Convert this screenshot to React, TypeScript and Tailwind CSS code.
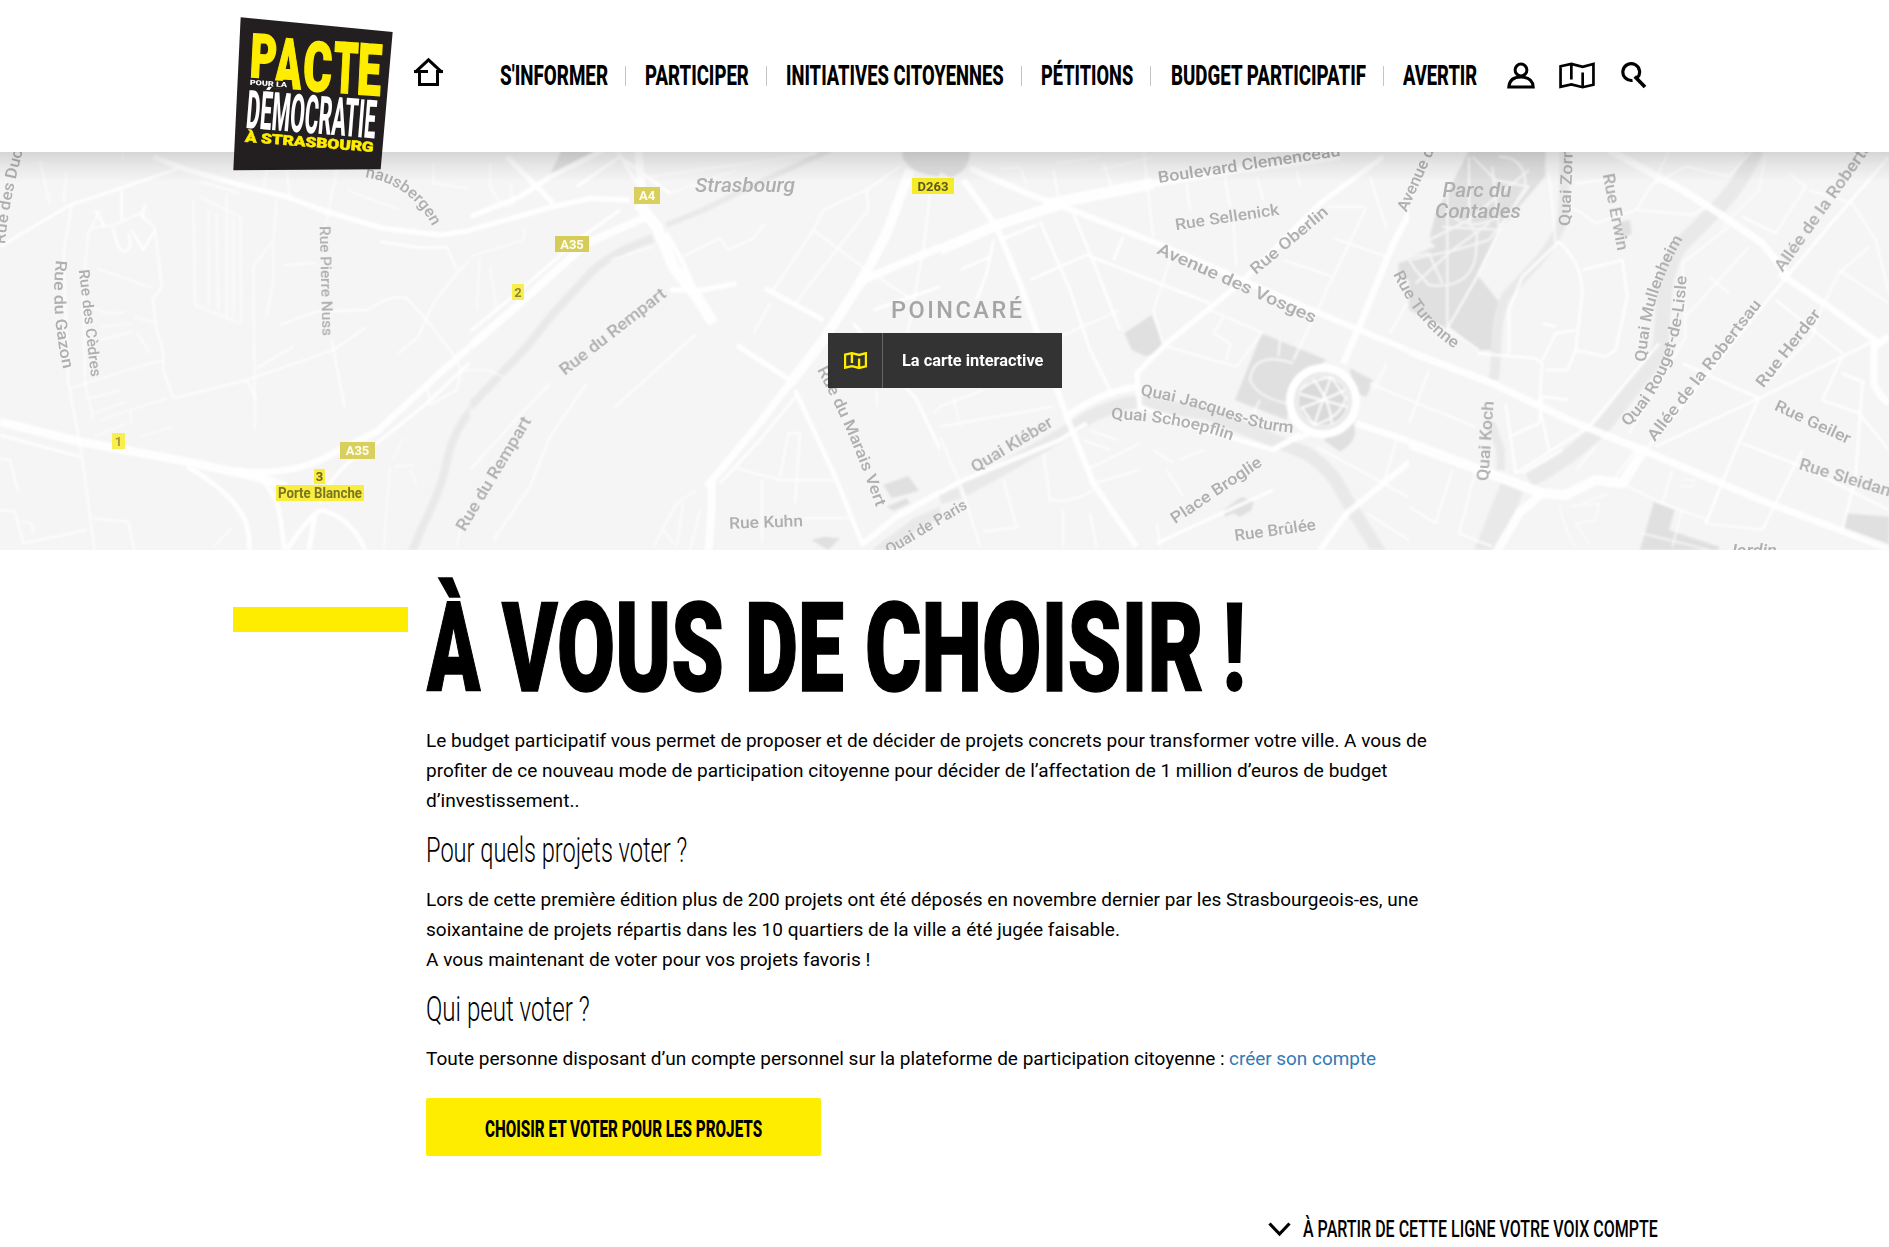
import { useLayoutEffect, useRef, useState } from "react";
import type { ReactNode } from "react";

/** Text condensed (or stretched) horizontally so that it fills the width of its box. */
function Fit({ className = "", children }: { className?: string; children: ReactNode }) {
  const box = useRef<HTMLSpanElement>(null);
  const text = useRef<HTMLSpanElement>(null);
  const [scale, setScale] = useState(1);
  useLayoutEffect(() => {
    if (box.current && text.current) setScale(box.current.offsetWidth / text.current.offsetWidth);
  }, []);
  return (
    <span ref={box} className={"block shrink-0 " + className}>
      <span
        ref={text}
        className="inline-block origin-left whitespace-nowrap"
        style={{ transform: `scaleX(${scale})` }}
      >
        {children}
      </span>
    </span>
  );
}

function MapIcon({ className }: { className: string }) {
  return (
    <svg className={className} viewBox="0 0 35 26" fill="none" stroke="currentColor">
      <path d="M1.5 4 L12 1.8 L23 4.6 L33.5 1.8 V22 L23 24.4 L12 21.6 L1.5 24 Z" />
      <path d="M12 2 V17 M23 10 V24" />
    </svg>
  );
}

function Logo() {
  return (
    <svg className="block h-[156px] w-[162px]" viewBox="39 48 486 468" fontFamily="Roboto" fontWeight="900">
      <polygon points="62,52 518,96 482,508 40,511" fill="#231f20" />
      <g fill="#ffed00" stroke="#ffed00" strokeWidth="5">
        <text transform="matrix(1 .07 -.05 1 88 230)" fontSize="182" textLength="80" lengthAdjust="spacingAndGlyphs">P</text>
        <text transform="matrix(1 .07 -.05 1 161 262)" fontSize="208" textLength="80" lengthAdjust="spacingAndGlyphs">A</text>
        <text transform="matrix(1 .07 -.05 1 247 270)" fontSize="206" textLength="86" lengthAdjust="spacingAndGlyphs">C</text>
        <text transform="matrix(1 .07 -.05 1 337 276)" fontSize="212" textLength="73" lengthAdjust="spacingAndGlyphs">T</text>
        <text transform="matrix(1 .07 -.05 1 409 282)" fontSize="214" textLength="72" lengthAdjust="spacingAndGlyphs">E</text>
      </g>
      <text transform="matrix(1 .08 -.08 1 76 384)" fontSize="160" fontWeight="800" fill="#fff" textLength="388" lengthAdjust="spacingAndGlyphs">DÉMOCRATIE</text>
      <polygon points="80,237 207,244 205,268 80,262" fill="#231f20" />
      <path d="M138 269 L145 260 L156 261 L148 270 Z" fill="#fff" />
      <text transform="matrix(1 .07 -.05 1 89 254)" fontSize="21" fill="#fff" textLength="112" lengthAdjust="spacingAndGlyphs">POUR LA</text>
      <text transform="matrix(1 .08 -.08 1 74 425)" fontSize="41" fill="#ffed00" stroke="#ffed00" strokeWidth="1.5" textLength="386" lengthAdjust="spacingAndGlyphs">À STRASBOURG</text>
    </svg>
  );
}

type Road = [number, string];
type Tile = { x: number; water: Road[]; parks: string[]; roads: Road[] };

/* Street plan, cut in four tiles; each is drawn at three times its size. */
const tiles: Tile[] = [
  {
    x: 0,
    water: [[24, "M1450 740 C1370 820 1350 880 1335 960 C1310 1060 1270 1110 1235 1210"]],
    parks: [],
    roads: [
      [26, "M0 815 L240 875 L560 935 L790 985 L860 1010"],
      [20, "M700 960 Q880 985 1010 905 L1130 845 L1330 660 L1440 565"],
      [10, "M960 1060 Q1000 950 1130 880 L1280 760 L1440 610"],
      [9, "M0 855 L130 890 L240 920"],
      [14, "M560 950 Q690 1020 735 1110 Q750 1150 748 1210"],
      [14, "M780 985 Q830 1030 840 1100 L855 1210"],
      [14, "M860 1200 Q950 1060 980 1085 Q1060 1110 1100 1210"],
      [16, "M945 1090 L925 1210"],
      [9, "M0 290 L210 165 L390 105 L550 50"],
      [16, "M460 20 L550 55 L720 105 L860 140 L980 185 L1150 235 L1320 255 L1440 238"],
      [6, "M600 95 L720 130"],
      [8, "M1140 275 L1260 293 L1340 292"],
      [7, "M215 165 L190 310 L205 700 L240 880 L270 1100 L285 1210"],
      [6, "M300 180 L265 250 L250 400 L255 700 L280 810"],
      [7, "M270 235 L340 225 L420 190 L465 235 L485 410 L458 450 L470 540 L490 610 L490 660 L520 745"],
      [8, "M340 235 Q350 300 375 305 Q400 295 385 250 M395 240 Q430 300 430 300 L465 240 M315 230 L285 180 M365 120 L365 210 M440 165 Q420 180 432 210"],
      [6, "M290 355 L460 415 M280 470 Q320 500 375 485 M400 500 L470 520 M410 545 L450 610 M210 715 L400 655 L490 630 M300 570 L400 545"],
      [5, "M270 745 L360 720 M280 790 L380 755 M300 810 L500 745 M390 780 L395 820 M420 860 L520 830 M280 860 L380 820"],
      [6, "M120 30 L150 165 M200 70 L190 160 M370 0 L365 30 M800 60 L790 110 M860 60 L870 140 M1010 60 L985 185 L975 230"],
      [6, "M580 150 L585 465 L720 520 M600 140 L720 200 L725 520 M625 180 L625 470 M650 190 L655 480 M680 130 L680 500 M700 200 L700 500"],
      [6, "M830 150 L820 270 L760 350 L765 840 M820 280 L820 390 L800 500 M850 345 L950 340"],
      [7, "M520 745 L740 690 L1000 600 L1100 530 M770 655 L880 590 M740 690 L770 750"],
      [7, "M840 525 L950 485 L1100 480 Q1180 430 1220 445 L1280 510 L1350 600 M1000 600 L1035 775 M995 570 L1000 600"],
      [7, "M1440 300 L1370 370 L1300 460 L1255 560 L1195 610 M1340 290 L1370 360"],
      [7, "M1350 600 L1385 660 L1370 720 L1290 765 M1390 660 L1440 665 M1280 700 L1290 765"],
      [7, "M0 925 L30 930 L55 1025 M0 1080 L45 1085 L70 1180 L260 1140 M65 1115 L95 1120 L100 1150 M280 1105 L385 1115 L405 1210"],
      [5, "M1040 120 L1200 180 M1170 950 L1150 1200 M1230 960 L1250 1000 M1180 950 L1240 945 M640 1190 L700 1130 M1300 40 L1300 100 L1440 120 M1370 1190 L1390 1100 L1440 1030"],
      [4, "M1440 340 L1410 500 L1440 520 M1210 860 L1180 930 M300 530 L400 520"],
    ],
  },
  {
    x: 470,
    water: [
      [24, "M550 265 Q440 300 370 360 L250 490 L170 590 L0 770"],
      [16, "M590 225 L700 180 L820 120 L1080 0"],
      [34, "M1440 1075 L1340 1120 L1220 1210"],
    ],
    parks: [
      "M275 0 L375 0 Q310 60 240 75 Z",
      "M1297 0 H1440 V65 L1400 78 Q1320 70 1297 20 Z",
      "M1240 1005 L1315 978 L1347 1022 L1265 1045 Z",
      "M1025 1170 L1060 1160 L1110 1165 L1075 1200 Z",
      "M1250 1070 L1310 1045 L1320 1060 L1270 1082 Z",
    ],
    roads: [
      [24, "M0 590 L150 460 L350 280 L530 200"],
      [10, "M0 545 L140 430 L330 265 L450 180"],
      [16, "M0 240 L250 170 L360 145 L480 150"],
      [16, "M110 20 L250 160 M0 200 L150 140 L240 80 L400 0"],
      [34, "M505 160 L560 230 L610 350 L680 440 L730 520"],
      [14, "M590 250 L640 340 L670 410"],
      [16, "M600 420 L700 420 L800 400"],
      [24, "M505 0 L520 170"],
      [10, "M320 110 L450 20 L600 130 M440 0 L500 100"],
      [30, "M1320 60 L1250 250 L1170 400 L1060 570 L960 700"],
      [24, "M1440 280 L1260 355 L1160 400"],
      [16, "M885 415 L1060 510 M800 585 L960 690"],
      [22, "M960 700 L860 830 L710 1010"],
      [8, "M985 730 L870 870 L750 1000"],
      [24, "M725 1000 L725 1080 L715 1210"],
      [14, "M975 720 L1100 990 L1180 1190"],
      [10, "M1150 520 L1340 750 L1440 960 M1210 480 L1440 400"],
      [18, "M1180 1180 L1280 1100 L1440 1010"],
      [7, "M640 320 L750 265 L775 300 L850 265 L885 220"],
      [7, "M430 775 L680 550 M240 700 L90 860 L0 960 M350 700 L240 860 L180 1010 L70 1170"],
      [7, "M910 420 L1030 240 L1060 180 L1190 120 L1290 50 M1190 120 L1195 180 L1060 350 L970 470 M1030 240 L1190 360 L1330 450 M900 460 L850 550"],
      [7, "M1380 130 L1360 300 L1310 560 M800 955 L930 990 L1100 990 M930 980 L955 850 L990 850 L975 1060 M875 990 L875 1180 M1000 1105 L1140 1105"],
      [6, "M680 1020 L620 1060 L550 1190 M640 1060 L620 1190 M690 1080 L660 1200 M580 1140 L610 1180"],
      [5, "M0 660 L50 660 L100 680 M30 320 L20 480 M60 350 L80 480 M420 330 L550 290 M0 320 L160 270 L165 230"],
      [6, "M60 40 L60 110 Q100 190 130 160 L120 100 M1220 720 L1220 770 M1440 740 L1390 790"],
      [5, "M540 80 L900 30 L1040 10 M600 130 L800 60"],
    ],
  },
  {
    x: 940,
    water: [
      [40, "M70 1020 Q240 930 380 845 L450 800 Q580 740 620 760 L800 790 Q1000 870 1100 910 Q1180 960 1220 1050 L1320 1210"],
      [34, "M0 1045 L60 1030"],
    ],
    parks: [
      "M0 0 H90 Q90 65 30 82 L0 65 Z",
      "M553 550 L635 495 L668 580 Q640 620 615 618 L575 600 Z",
      "M965 550 L1160 630 L1060 700 L1040 810 L885 750 Z",
      "M1230 655 L1298 690 L1280 740 L1240 730 Z",
      "M1150 870 L1240 820 Q1260 870 1200 905 Z",
      "M850 1080 L905 1040 L940 1055 L935 1080 L900 1100 L880 1090 L855 1100 Z",
      "M1375 340 L1440 320 V400 L1375 380 Z",
    ],
    roads: [
      [32, "M0 300 L170 225 L370 160"],
      [34, "M310 165 L440 140 L640 100"],
      [20, "M640 100 L900 60 L1200 20"],
      [18, "M90 55 L260 130 L410 185 L650 280 L860 370 L1150 495 L1440 615"],
      [18, "M70 90 L170 230 L240 400 L310 600 L380 800 L460 1000 L590 1190"],
      [16, "M1330 20 L1140 160 L900 400 L680 580 L590 670 L600 780"],
      [20, "M380 800 Q480 725 590 710"],
      [20, "M1440 130 L1360 280 L1270 500 L1210 640"],
      [14, "M0 1030 L50 1000 L360 870 L440 820 M600 770 L760 830 L1000 900 L1060 870 L1110 850"],
      [10, "M650 1180 L800 1110 L1000 1020 M990 900 L1080 850"],
      [20, "M1250 820 L1440 885"],
      [18, "M1440 910 L1330 1000 L1220 1090 L1140 1200"],
      [9, "M300 215 L390 420 L450 600 L520 740 M400 190 L470 360 L540 540 M550 260 L520 330 M60 360 L150 320 M270 390 L440 315 L620 385 L810 460 M180 270 L290 225 M160 270 L140 370 L110 450"],
      [7, "M340 60 L355 140 M490 40 L515 110 M610 0 L640 260 M740 100 L750 180 M855 80 L870 170 M880 220 L890 350 M950 80 L970 150 M1070 60 L1080 110 M1290 80 L1340 240 M1160 170 L1270 170 M1180 265 L1340 320 M1280 170 L1180 380 L1060 630 M1030 330 L1180 380 M1400 460 L1350 550"],
      [7, "M690 330 L640 480 L668 580 M680 590 L890 650 L965 550 M810 480 L970 550 M850 500 L820 550 L870 580 L860 630 M360 560 L540 480"],
      [7, "M60 1000 L120 1190 M190 990 L230 1130 M310 910 L330 1050 Q400 1060 460 1020 M370 1080 L370 1190 M130 1145 L240 1130 M0 860 L60 1000 M0 830 L340 770 M0 770 L130 720 M450 840 L530 870 M430 870 L510 900 M440 960 L600 880 M460 1000 L600 960 M680 960 L730 1040 M640 900 L700 940 M450 1090 L470 1190"],
      [7, "M1370 870 L1330 1000 M1440 800 L1430 760 L1290 700 M1340 640 L1300 720 M1130 890 L1440 1060 M1280 1090 L1440 1190 M720 930 L790 900 M660 1190 L650 1120"],
      [6, "M1020 570 L1015 620 M1060 640 Q940 600 930 690 Q950 740 1040 760 M960 750 L940 790"],
      [5, "M180 60 L240 50 L260 100 M350 40 L480 20 M480 60 L640 20 M0 560 L100 640 L140 720 M40 740 L60 830"],
    ],
  },
  {
    x: 1409,
    water: [
      [30, "M468 0 L462 200 Q450 260 390 330 L290 440 Q262 500 262 600 L255 690"],
      [26, "M245 820 L275 900 L275 960"],
      [46, "M1040 0 Q1000 100 920 180 L820 280 Q770 340 765 450 L755 580 Q740 640 690 690 L590 820 Q480 930 360 990"],
      [72, "M310 1010 L230 1210"],
    ],
    parks: [
      "M180 0 L410 0 L408 80 L270 240 L205 370 L115 535 L0 480 V320 L80 290 L60 270 L80 190 L130 100 Z",
      "M205 375 L270 455 L265 600 L210 600 L120 530 Z",
      "M635 215 L662 210 L668 250 L640 270 Z",
      "M735 1055 L797 1080 L780 1140 L930 1190 V1210 H690 Z",
      "M1310 1090 L1440 1100 V1200 L1295 1140 Z",
    ],
    roads: [
      [22, "M0 605 L250 700 L480 810 L700 900 L1080 1060 L1440 1195"],
      [30, "M0 880 L200 955 L400 1030 L470 1035 L560 990 L640 1000 L710 890"],
      [26, "M400 1030 L330 1090 L260 1210"],
      [22, "M600 0 L820 120 L930 190 L1060 280 L1140 380"],
      [20, "M1110 370 L1260 470 L1410 580"],
      [22, "M1440 560 L1395 590 L1395 700 Q1410 740 1440 760"],
      [9, "M715 895 L1100 420 L1250 240 L1440 20"],
      [6, "M180 20 L180 200 Q190 250 205 250 L200 320 Q180 420 60 405 L20 360 L0 330 L140 300 L240 270 L360 110 L260 90 L190 20 M115 100 L115 535 M250 50 L270 240 L205 380 L115 535 L210 600 M60 270 L180 210 L360 60 M100 230 L280 240 M270 20 Q350 20 350 110 L270 240 M20 400 L130 300 L240 220 M0 320 L60 310 L100 400 M120 190 Q180 250 270 200"],
      [8, "M205 610 L380 625 L400 640 L390 760 L420 900 M300 610 L300 480 L340 380 L450 275 Q520 340 520 430 L500 600 L475 660 L410 660 M520 360 L640 330 L655 440 L620 600 L590 620 L500 600 M500 540 L440 550 L400 630 M400 520 L440 530"],
      [8, "M290 760 L320 970 L540 830 L700 640 L750 580 M300 860 L390 820 L400 740 L480 750 M340 970 L460 900"],
      [7, "M420 70 L440 280 M480 170 L520 190 L560 220 L620 200 L680 180 L850 195 L890 170 M680 180 L740 90 L780 0 M740 100 L830 50 L960 80 L1030 0 M500 100 L580 90"],
      [7, "M960 230 L820 340 L830 560 L750 700 L660 850 M900 380 L960 430 M1020 290 L830 500 M1140 70 L1190 110 L1100 250 L1000 200 M1200 120 L1330 160 L1400 270 L1440 430 M1380 290 L1290 370 L1240 470 L1210 560 L1060 710 M1290 360 L1440 460"],
      [8, "M740 890 L1050 745 L1400 570 M820 640 L1050 745 L980 900 L890 1120 M1000 880 L1180 950 L1440 1080 M1180 900 L1060 1140 M1360 700 L1340 980 L1300 1140 M1300 670 L1370 700 M1300 620 L1240 750 L1350 790 L1440 900 M1100 450 L1300 610"],
      [7, "M60 660 L0 820 M0 750 L200 830 M130 960 L80 1120 L0 1070 M200 960 L150 1150 L250 1190 M790 960 L760 1060 M930 1020 L890 1120 L1060 1140 M640 1000 L760 1060 L900 1110 M560 890 L500 960 M680 900 L620 980"],
      [5, "M450 1060 Q470 1150 500 1190 M480 1070 L570 1060 L560 1110 L500 1120 L540 1180 M520 1060 L600 1030 M820 990 L860 990 L850 1010 L810 1010 M1070 20 L1050 120 L940 230 M700 1150 L900 1200 M820 1080 L790 1190"],
    ],
  },
];

type Label = { t: string; x: number; y: number; r: number; w: number; s?: number; i?: boolean };

/* x, y: middle of the label; r: its angle; w: its length. */
const labels: Label[] = [
  { t: "Rue des Cèdres", x: 90, y: 323, r: 83.5, w: 108, s: 15 },
  { t: "Rue Pierre Nuss", x: 326, y: 281, r: 88.5, w: 110, s: 15 },
  { t: "Rue du Rempart", x: 613, y: 332, r: -38, w: 130 },
  { t: "Rue du Rempart", x: 494, y: 474, r: -59, w: 130 },
  { t: "Strasbourg", x: 745, y: 185, r: 0, w: 100, s: 20.5, i: true },
  { t: "Rue Kuhn", x: 766, y: 522, r: -2, w: 74 },
  { t: "Quai Kléber", x: 1012, y: 445, r: -31, w: 92 },
  { t: "Quai de Paris", x: 926, y: 527, r: -31, w: 92, s: 15 },
  { t: "Boulevard Clemenceau", x: 1249, y: 164, r: -8.5, w: 184 },
  { t: "Rue Sellenick", x: 1227, y: 217, r: -8.5, w: 105 },
  { t: "Rue Oberlin", x: 1289, y: 240, r: -40, w: 96 },
  { t: "Avenue des Vosges", x: 1237, y: 283, r: 24, w: 172, s: 17 },
  { t: "Place Broglie", x: 1216, y: 490, r: -34, w: 106 },
  { t: "Rue Brûlée", x: 1275, y: 530, r: -8, w: 82 },
  { t: "Parc du", x: 1477, y: 190, r: 0, w: 69, s: 19.5, i: true },
  { t: "Contades", x: 1478, y: 211, r: 0, w: 86, s: 19.5, i: true },
  { t: "Avenue de la Paix", x: 1428, y: 151, r: -66, w: 130 },
  { t: "Quai Zorn", x: 1566, y: 187, r: -88, w: 78 },
  { t: "Rue Erwin", x: 1615, y: 212, r: 79, w: 78 },
  { t: "Quai Koch", x: 1486, y: 441, r: -86, w: 80 },
  { t: "Allée de la Robertsau", x: 1704, y: 370, r: -52, w: 174 },
  { t: "Allée de la Robertsau", x: 1829, y: 199, r: -54.5, w: 174 },
  { t: "Rue Herder", x: 1788, y: 348, r: -52, w: 94 },
  { t: "Rue Geiler", x: 1813, y: 422, r: 25, w: 82 },
  { t: "Rue Sleidan", x: 1845, y: 478, r: 17, w: 95 },
  { t: "Jardin", x: 1752, y: 551, r: 0, w: 50, s: 19, i: true },
];

const curved: { id: string; t: string; d: string; w: number }[] = [
  { id: "ducs", t: "Rue des Ducs", d: "M5 244 Q9 196 29 130", w: 104 },
  { id: "gazon", t: "Rue du Gazon", d: "M56 260 Q50 312 64 372", w: 110 },
  { id: "hausbergen", t: "hausbergen", d: "M365 177 Q415 185 436 234", w: 87 },
  { id: "marais", t: "Rue du Marais Vert", d: "M817 370 Q850 430 880 518", w: 150 },
  { id: "sturm", t: "Quai Jacques-Sturm", d: "M1140 395 Q1180 402 1220 415 Q1260 432 1302 433", w: 158 },
  { id: "schoepflin", t: "Quai Schoepflin", d: "M1111 419 Q1180 421 1236 442", w: 123 },
  { id: "turenne", t: "Rue Turenne", d: "M1393 274 Q1420 330 1462 353", w: 98 },
  { id: "mullenheim", t: "Quai Mullenheim", d: "M1646 362 Q1650 290 1686 234", w: 130 },
  { id: "rouget", t: "Quai Rouget-de-Lisle", d: "M1628 427 Q1686 370 1687 262", w: 166 },
];

const badges = [
  { t: "A4", x: 634, y: 187, w: 26, h: 17, bg: "#d9cf5c", fg: "#fffef0" },
  { t: "A35", x: 555, y: 236, w: 34, h: 16, bg: "#d6cc5a", fg: "#fffef0" },
  { t: "A35", x: 340, y: 442, w: 35, h: 17, bg: "#d9cf5c", fg: "#fffef0" },
  { t: "2", x: 512, y: 284, w: 12, h: 16, bg: "#f8ee4e", fg: "#8d8736" },
  { t: "1", x: 112, y: 433, w: 13, h: 16, bg: "#f8ee4e", fg: "#a39b3c" },
  { t: "3", x: 314, y: 469, w: 11, h: 15, bg: "#f9ee3f", fg: "#6b651f" },
];

function CityMap() {
  return (
    <svg className="block h-[398px] w-[1889px]" viewBox="0 152 1889 398" fontFamily="Roboto">
      <defs>
        <linearGradient id="shade" x1="0" y1="0" x2="0" y2="1">
          <stop offset="0" stopColor="#000" stopOpacity=".13" />
          <stop offset=".4" stopColor="#000" stopOpacity=".06" />
          <stop offset="1" stopColor="#000" stopOpacity="0" />
        </linearGradient>
        <filter id="soft-streets" x="0" y="0" width="1" height="1">
          <feGaussianBlur stdDeviation=".9" />
        </filter>
        <filter id="soft-labels" x="0" y="0" width="1" height="1">
          <feGaussianBlur stdDeviation=".5" />
        </filter>
        {tiles.map((tile) => (
          <clipPath key={tile.x} id={"tile" + tile.x}>
            <rect x="0" y="0" width={tile.x === 940 ? 1407 : tile.x === 1409 ? 1440 : 1410} height="1200" />
          </clipPath>
        ))}
      </defs>
      <rect y="152" width="1889" height="398" fill="#f5f5f5" />
      <g filter="url(#soft-streets)">
        {tiles.map((tile) => (
          <g key={tile.x} transform={`translate(${tile.x} 150) scale(.33333)`}>
            <g clipPath={`url(#tile${tile.x})`} fill="none" strokeLinejoin="round">
              {tile.parks.map((d) => (
                <path key={d} d={d} fill="#e0e0e0" />
              ))}
              {tile.water.map(([w, d]) => (
                <path key={d} d={d} stroke="#e9e9e9" strokeWidth={w} />
              ))}
              {tile.roads.map(([w, d]) => (
                <path key={d} d={d} stroke="#fff" strokeWidth={w} opacity={w < 8 ? 0.75 : 0.9} />
              ))}
            </g>
          </g>
        ))}
        <circle cx="1323" cy="401" r="33" fill="#e9e9e9" stroke="#fff" strokeWidth="8" />
        <circle cx="1323" cy="401" r="25" fill="#dadada" stroke="#f1f1f1" strokeWidth="2" />
        <path
          d="M1300 394 L1348 407 M1331 377 L1314 425 M1313 379 Q1330 400 1332 424 M1345 390 Q1325 400 1301 408 M1300 390 Q1312 380 1331 377 L1346 398 Q1340 418 1314 425 L1302 408"
          fill="none"
          stroke="#fff"
          strokeWidth="2"
        />
      </g>
      <g filter="url(#soft-labels)">
        <g fill="#afafaf" fontSize="16" fontWeight="500">
          {labels.map((l) => (
            <text
              key={l.t + l.x}
              transform={`translate(${l.x} ${l.y}) rotate(${l.r})`}
              x={-l.w / 2}
              y={(l.s ?? 16) * 0.34}
              fontSize={l.s ?? 16}
              fontStyle={l.i ? "italic" : "normal"}
              textLength={l.w}
              lengthAdjust="spacingAndGlyphs"
            >
              {l.t}
            </text>
          ))}
          {curved.map((c) => (
            <g key={c.id}>
              <path id={c.id} d={c.d} fill="none" />
              <text>
                <textPath href={"#" + c.id} textLength={c.w} lengthAdjust="spacingAndGlyphs">
                  {c.t}
                </textPath>
              </text>
            </g>
          ))}
          <text x="891" y="318" fontSize="23.5" fill="#a5a5a5" textLength="131" lengthAdjust="spacing">
            POINCARÉ
          </text>
        </g>
        <g fontSize="13" fontWeight="700" textAnchor="middle">
          {badges.map((b) => (
            <g key={b.t + b.x}>
              <rect x={b.x} y={b.y} width={b.w} height={b.h} fill={b.bg} />
              <text x={b.x + b.w / 2} y={b.y + b.h / 2 + 4.6} fill={b.fg}>
                {b.t}
              </text>
            </g>
          ))}
          <rect x="912" y="178" width="42" height="16" fill="#f7ec2b" />
          <text x="933" y="191" fill="#5d5920">D263</text>
          <rect x="276" y="485" width="88" height="16" fill="#f9ee3f" />
          <text x="320" y="498" fontSize="14" fill="#7a7425" textLength="84" lengthAdjust="spacingAndGlyphs">
            Porte Blanche
          </text>
        </g>
      </g>
      <rect y="152" width="1889" height="30" fill="url(#shade)" />
    </svg>
  );
}

function Separator({ className = "" }: { className?: string }) {
  return <span className={"h-5 w-px shrink-0 bg-[#c4c4c4] " + className} />;
}

function Header() {
  return (
    <header className="flex h-[152px] items-start bg-white pl-[233px]">
      <a className="relative z-10 mt-4 h-[156px] w-[162px] shrink-0">
        <Logo />
      </a>
      <svg className="mt-[57px] ml-[18px] h-[30px] w-[31px] shrink-0" viewBox="0 0 31 30" fill="none" stroke="#000" strokeWidth="3">
        <path d="M2 15.3 L15.5 2.8 L29 15.3 M1 14.4 H8 M23 14.4 H30" />
        <path d="M6.5 13.5 V27.5 H24.5 V13.5 M6.5 14.4 H15" />
      </svg>
      <nav className="mt-[61px] ml-[56px] flex h-[30px] items-center font-['Roboto'] text-[27.5px] leading-[30px] font-extrabold text-black">
        <Fit className="w-[108px]">S'INFORMER</Fit>
        <Separator className="ml-[17px] w-0.5" />
        <Fit className="ml-[19px] w-[104px]">PARTICIPER</Fit>
        <Separator className="ml-[17px] w-0.5" />
        <Fit className="ml-[19px] w-[218px]">INITIATIVES CITOYENNES</Fit>
        <Separator className="ml-[17px]" />
        <Fit className="ml-[19px] w-[92px]">PÉTITIONS</Fit>
        <Separator className="ml-[17px]" />
        <Fit className="ml-[20px] w-[195px]">BUDGET PARTICIPATIF</Fit>
        <Separator className="ml-[17px]" />
        <Fit className="ml-[19px] w-[74px]">AVERTIR</Fit>
      </nav>
      <svg className="mt-[62px] ml-[30px] h-[27px] w-[28px] shrink-0" viewBox="0 0 28 27" fill="none" stroke="#000" strokeWidth="3">
        <circle cx="14" cy="8" r="5.9" />
        <path d="M1.8 25 Q2.5 15 14 15 Q25.5 15 26.2 25 Z" />
      </svg>
      <MapIcon className="mt-[62px] ml-[24px] h-[27px] w-[36px] shrink-0 stroke-[2.6] text-black" />
      <svg className="mt-[62px] ml-[24px] h-[27px] w-[28px] shrink-0" viewBox="0 0 28 27" fill="none" stroke="#000" strokeWidth="3.2">
        <path d="M13.5 18.4 A8.4 8.4 0 1 1 18 16.2" />
        <path d="M15.8 14.4 L26 25" strokeWidth="3.6" />
      </svg>
    </header>
  );
}

export default function App() {
  return (
    <div className="h-[1247px] w-[1889px] overflow-hidden bg-white font-['Roboto',sans-serif] text-black">
      <Header />
      <section className="relative h-[398px]">
        <CityMap />
        <a className="absolute top-[181px] left-[828px] flex h-[55px] w-[234px] items-center bg-[#262626]/94 text-white">
          <span className="flex h-full w-[55px] items-center justify-center border-r border-[#666]">
            <MapIcon className="h-[17px] w-[23px] stroke-[3.6] text-[#ffed00]" />
          </span>
          <Fit className="ml-[19px] w-[141px] text-[16px] leading-[20px] font-bold">La carte interactive</Fit>
        </a>
      </section>
      <main>
        <div className="flex pl-[233px]">
          <div className="mt-[57px] h-[25px] w-[175px] bg-[#ffed00]" />
          <div className="ml-[18px]">
            <h1 className="mt-[37px] flex text-[124px] leading-[124px] font-black">
              <Fit className="ml-[1px] w-[53px] [-webkit-text-stroke:1.5px_#000]">À</Fit>
              <Fit className="ml-[22px] w-[222px] [-webkit-text-stroke:1.5px_#000]">VOUS</Fit>
              <Fit className="ml-[21px] w-[99px] [-webkit-text-stroke:1.5px_#000]">DE</Fit>
              <Fit className="ml-[21px] w-[339px] [-webkit-text-stroke:1.5px_#000]">CHOISIR</Fit>
              <Fit className="ml-[18px] w-[24px]">!</Fit>
            </h1>
            <div className="mt-[15px] text-[17.5px] leading-[30px] font-[390]">
              <Fit className="w-[1001px]">
                Le budget participatif vous permet de proposer et de décider de projets concrets pour transformer votre
                ville. A vous de
              </Fit>
              <Fit className="w-[961px]">
                profiter de ce nouveau mode de participation citoyenne pour décider de l’affectation de 1 million
                d’euros de budget
              </Fit>
              <Fit className="w-[154px]">d’investissement..</Fit>
            </div>
            <h2 className="mt-[15px] text-[35px] leading-[40px] font-light">
              <Fit className="w-[261px]">Pour quels projets voter ?</Fit>
            </h2>
            <div className="mt-[14px] text-[17.5px] leading-[30px] font-[390]">
              <Fit className="w-[992px]">
                Lors de cette première édition plus de 200 projets ont été déposés en novembre dernier par les
                Strasbourgeois-es, une
              </Fit>
              <Fit className="w-[694px]">
                soixantaine de projets répartis dans les 10 quartiers de la ville a été jugée faisable.
              </Fit>
              <Fit className="w-[444px]">A vous maintenant de voter pour vos projets favoris !</Fit>
            </div>
            <h2 className="mt-[15px] text-[35px] leading-[40px] font-light">
              <Fit className="w-[164px]">Qui peut voter ?</Fit>
            </h2>
            <p className="mt-[14px] flex text-[17.5px] leading-[30px] font-[390]">
              <Fit className="w-[799px]">
                Toute personne disposant d’un compte personnel sur la plateforme de participation citoyenne :
              </Fit>
              <a className="ml-[4px] text-[#337ab7]">
                <Fit className="w-[147px]">créer son compte</Fit>
              </a>
            </p>
            <a className="mt-[24px] flex h-[58px] w-[395px] items-center rounded-[2px] bg-[#ffed00] pt-[3px] pl-[59px] text-[23.5px] leading-[30px] font-extrabold">
              <Fit className="w-[277px]">CHOISIR ET VOTER POUR LES PROJETS</Fit>
            </a>
          </div>
        </div>
        <div className="mt-[58px] flex items-center pl-[1268px] text-[24.5px] leading-[30px] font-medium">
          <svg className="h-[15px] w-[23px]" viewBox="0 0 23 15" fill="none" stroke="#000" strokeWidth="3.2">
            <path d="M1.5 1.5 L11.5 12 L21.5 1.5" />
          </svg>
          <Fit className="ml-[12px] w-[355px]">À PARTIR DE CETTE LIGNE VOTRE VOIX COMPTE</Fit>
        </div>
      </main>
    </div>
  );
}
